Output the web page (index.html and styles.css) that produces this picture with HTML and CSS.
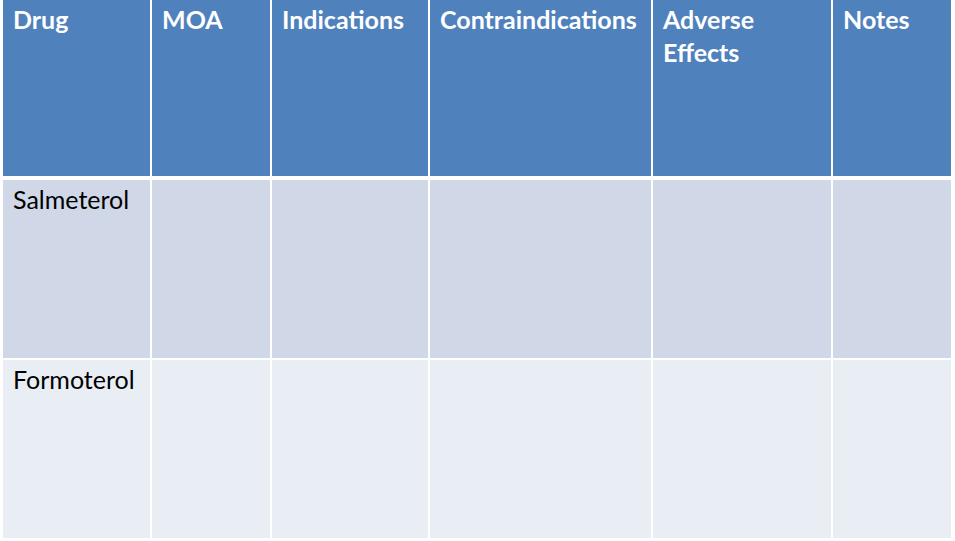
FILE: index.html
```html
<!DOCTYPE html>
<html>
<head>
<meta charset="utf-8">
<link rel="stylesheet" href="styles.css">
</head>
<body>
<div class="page">
  <div class="grid">
    <div class="cell head">Drug</div>
    <div class="cell head">MOA</div>
    <div class="cell head">Indications</div>
    <div class="cell head">Contraindications</div>
    <div class="cell head">Adverse<br>Effects</div>
    <div class="cell head">Notes</div>

    <div class="cell odd">Salmeterol</div>
    <div class="cell odd"></div>
    <div class="cell odd"></div>
    <div class="cell odd"></div>
    <div class="cell odd"></div>
    <div class="cell odd"></div>

    <div class="cell even">Formoterol</div>
    <div class="cell even"></div>
    <div class="cell even"></div>
    <div class="cell even"></div>
    <div class="cell even"></div>
    <div class="cell even"></div>
  </div>
</div>
</body>
</html>
```

FILE: styles.css
```css
html, body {
  margin: 0;
  padding: 0;
  background: #ffffff;
}

.page {
  padding-left: 3px;
  font-family: Lato, "Open Sans", sans-serif;
}

.grid {
  display: grid;
  grid-template-columns: 147px 118px 156px 221px 178px 118px;
  grid-template-rows: 178px 178px 178px;
  column-gap: 2px;
  row-gap: 2px;
}

.cell {
  padding: 3px 4px 0 10px;
  font-size: 25px;
  line-height: 33px;
  box-sizing: border-box;
  white-space: nowrap;
}

.head {
  background: #4f81bd;
  color: #ffffff;
  font-weight: 700;
  margin-bottom: 2px;
}

.odd {
  background: #d0d8e8;
  color: #000000;
}

.even {
  background: #e9edf4;
  color: #000000;
}
```
